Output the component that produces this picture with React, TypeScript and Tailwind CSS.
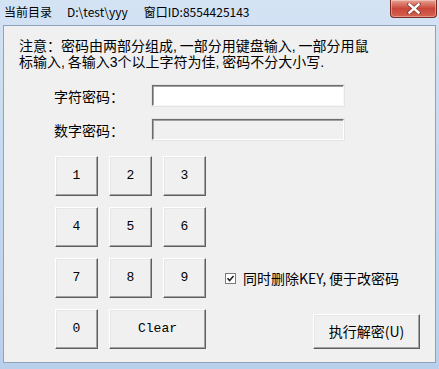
import React from "react";

const cjk = { fontFamily: '"Noto Sans CJK SC", "Noto Sans", sans-serif' };
const note = { fontFamily: '"Liberation Sans", "Noto Sans CJK SC", sans-serif' };
const mono = { fontFamily: '"Liberation Mono", "Noto Sans CJK SC", monospace' };

function KeyButton({ label, wide = false }: { label: string; wide?: boolean }) {
  return (
    <div
      className={`flex items-center justify-center bg-[#f0f0f0] border border-t-white border-l-white border-r-[#5f5f5f] border-b-[#5f5f5f] shadow-[inset_-1px_-1px_0_#a3a3a3,inset_1px_1px_0_#e6e6e6] text-[13px] text-black ${wide ? "col-span-2" : ""}`}
      style={mono}
    >
      {label}
    </div>
  );
}

export default function App() {
  const keys = ["1", "2", "3", "4", "5", "6", "7", "8", "9"];
  return (
    <div className="w-[439px] h-[369px] bg-gradient-to-b from-[#d4e3f4] via-[#c4d8ef] to-[#b9d0ec] overflow-hidden flex flex-col" style={cjk}>
      {/* title bar */}
      <div className="h-[25px] flex items-start shrink-0">
        <div className="flex pl-[4px] pt-[4px] text-[12px] leading-[16px] text-black" style={cjk}>
          <span>当前目录</span>
          <span className="ml-[15px]">D:\test\yyy</span>
          <span className="ml-[16px]">窗口ID:8554425143</span>
        </div>
        <div className="ml-auto mr-[2px] w-[47px] h-[18px] rounded-b-[4px] border border-t-0 border-[#7a2a20] bg-gradient-to-b from-[#e8a193] via-[#c8473a] to-[#d4634f] flex items-center justify-center shadow-[inset_0_0_0_1px_rgba(255,255,255,0.35)]">
          <svg width="14" height="11" viewBox="0 0 14 11">
            <path d="M2 1 L12 10 M12 1 L2 10" stroke="#5a1a12" strokeWidth="4" strokeLinecap="square" opacity="0.5" />
            <path d="M2.5 1.5 L11.5 9.5 M11.5 1.5 L2.5 9.5" stroke="#ffffff" strokeWidth="2.4" strokeLinecap="square" />
          </svg>
        </div>
      </div>

      {/* client area */}
      <div className="mx-[3px] h-[338px] border border-[#8ea4bd] bg-[#f0f0f0] flex flex-col shrink-0">
        <div className="pl-[15px] pt-[12px] text-[14px] text-black whitespace-nowrap" style={note}>
          <div className="h-[16px] leading-[16px]">注意：密码由两部分组成,{"\u2009"}一部分用键盘输入,{"\u2009"}一部分用鼠</div>
          <div className="h-[16px] leading-[16px]">标输入,{"\u2009"}各输入3个以上字符为佳,{"\u2009"}密码不分大小写.</div>
        </div>

        <div className="flex items-center mt-[15px]">
          <span className="ml-[50px] w-[98px] text-[14px] leading-[16px]">字符密码：</span>
          <div className="w-[192px] h-[21px] bg-white border border-t-[#6d6d6d] border-l-[#6d6d6d] border-b-[#f7f7f7] border-r-[#f7f7f7] shadow-[inset_1px_1px_0_#a0a0a0,0_0_0_1px_#e4e4e4]" />
        </div>
        <div className="flex items-center mt-[13px]">
          <span className="ml-[50px] w-[98px] text-[14px] leading-[16px]">数字密码：</span>
          <div className="w-[192px] h-[21px] bg-[#f0f0f0] border border-t-[#6d6d6d] border-l-[#6d6d6d] border-b-[#ffffff] border-r-[#ffffff] shadow-[inset_1px_1px_0_#a0a0a0,0_0_0_1px_#e4e4e4]" />
        </div>

        <div className="flex mt-[16px] ml-[51px]">
          <div className="grid grid-cols-[43px_43px_43px] grid-rows-[40px_40px_40px_40px] gap-x-[11px] gap-y-[11px]">
            {keys.map((k) => (
              <KeyButton key={k} label={k} />
            ))}
            <KeyButton label="0" />
            <KeyButton label="Clear" wide />
          </div>
          <div className="ml-[19px] grid grid-rows-[40px_40px_40px_40px] gap-y-[11px]">
            <div />
            <div />
            <div className="flex items-center">
              <div className="w-[11px] h-[11px] bg-white border border-[#7b7b7b] flex items-center justify-center">
                <svg width="9" height="9" viewBox="0 0 9 9">
                  <path d="M1.5 4.2 L3.6 6.5 L7.5 2" stroke="#222" strokeWidth="1.6" fill="none" />
                </svg>
              </div>
              <span className="ml-[7px] text-[14px] leading-[16px] text-black" style={cjk}>同时删除KEY,{"\u2009"}便于改密码</span>
            </div>
            <div className="pt-[5px] pl-[88px]">
              <div
                className="w-[107px] h-[35px] flex items-center justify-center bg-[#f0f0f0] border border-t-white border-l-white border-r-[#5f5f5f] border-b-[#5f5f5f] shadow-[inset_-1px_-1px_0_#a3a3a3,inset_1px_1px_0_#e6e6e6] text-[14px] text-black"
                style={cjk}
              >
                执行解密(U)
              </div>
            </div>
          </div>
        </div>
      </div>
    </div>
  );
}
